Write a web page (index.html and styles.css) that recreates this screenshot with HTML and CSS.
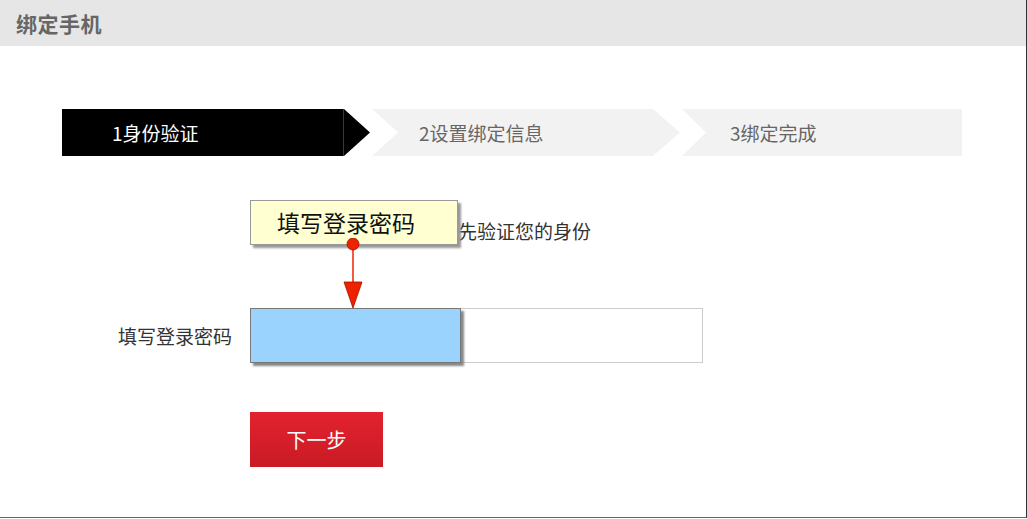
FILE: index.html
```html
<!DOCTYPE html>
<html lang="zh-CN">
<head>
    <meta charset="UTF-8">
    <meta name="viewport" content="width=device-width, initial-scale=1.0">
    <title>绑定手机</title>
    <link rel="stylesheet" href="styles.css">
</head>
<body>
    <div class="panel">
        <div class="panel-title">绑定手机</div>

        <!-- 步骤条 -->
        <div class="steps">
            <div class="step step-first active">1身份验证</div>
            <div class="step step-mid">2设置绑定信息</div>
            <div class="step step-last">3绑定完成</div>
        </div>

        <div class="form">
            <p class="intro">请先验证您的身份</p>
            <div class="form-row">
                <label class="form-label" for="pwd">填写登录密码</label>
                <input class="form-input" id="pwd" type="password">
            </div>
            <div class="form-row">
                <span class="form-label"></span>
                <button class="btn-next">下一步</button>
            </div>
        </div>

        <!-- 标注 -->
        <div class="note">填写登录密码</div>
        <svg class="note-pointer" width="24" height="72" viewBox="0 0 24 72">
            <line x1="12" y1="6" x2="12" y2="50" stroke="#ee2200" stroke-width="1.5"/>
            <polygon points="3,44 21,44 12,70" fill="#ee2200" stroke="#a01000" stroke-width="0.8"/>
            <circle cx="12" cy="6" r="6" fill="#ee2200" stroke="#a01000" stroke-width="0.8"/>
        </svg>
        <div class="note-field"></div>
    </div>
</body>
</html>
```
FILE: styles.css
```css
body {
    margin: 0;
    background-color: white;
    font-family: "Noto Sans CJK SC", "Liberation Sans", sans-serif;
}
.panel {
    position: relative;
    height: 518px;
    border-right: 1px solid #333;
    border-bottom: 1px solid #666;
    box-sizing: border-box;
    width: 1027px;
}
.panel-title {
    height: 46px;
    line-height: 46px;
    background-color: #e6e6e6;
    color: #666;
    font-size: 21px;
    font-weight: bold;
    padding-left: 16px;
    letter-spacing: 0.5px;
}
.steps {
    display: flex;
    gap: 2px;
    margin: 63px 0 0 62px;
    height: 47px;
}
.step {
    height: 47px;
    line-height: 47px;
    font-size: 19px;
    color: #666;
    background-color: #f2f2f2;
    box-sizing: border-box;
}
.step-first {
    width: 308px;
    padding-left: 50px;
    clip-path: polygon(0 0, 282px 0, 100% 50%, 282px 100%, 0 100%);
}
.step-first.active {
    background: linear-gradient(to right, #000 281px, #b00 281px, #b00 282px, #000 282px);
    color: white;
}
.step-mid {
    width: 308px;
    padding-left: 47px;
    clip-path: polygon(0 0, 281px 0, 100% 50%, 281px 100%, 0 100%, 26px 50%);
}
.step-last {
    width: 280px;
    padding-left: 48px;
    clip-path: polygon(0 0, 100% 0, 100% 100%, 0 100%, 24px 50%);
}
.form {
    display: flex;
    flex-direction: column;
}
.intro {
    margin: 60px 0 0 439px;
    font-size: 19px;
    line-height: 30px;
    color: #333;
}
.form-row {
    display: flex;
    align-items: center;
    gap: 19px;
}
.form-row + .form-row {
    margin-top: 49px;
}
.intro + .form-row {
    margin-top: 62px;
}
.form-label {
    width: 232px;
    text-align: right;
    font-size: 19px;
    color: #333;
}
.form-input {
    width: 453px;
    height: 55px;
    border: 1px solid #ccc;
    box-sizing: border-box;
    margin: 0 0 0 -1px;
}
.btn-next {
    width: 133px;
    height: 55px;
    border: none;
    margin-left: -1px;
    background: linear-gradient(#e3222f, #c81b25);
    color: white;
    font-family: inherit;
    font-size: 20px;
    cursor: pointer;
}
.note {
    position: absolute;
    left: 250px;
    top: 200px;
    width: 208px;
    height: 45px;
    box-sizing: border-box;
    background-color: #ffffd2;
    border: 1px solid #999;
    box-shadow: 3px 3px 2px #999;
    font-size: 23px;
    line-height: 43px;
    padding-left: 26px;
    color: #111;
}
.note-pointer {
    position: absolute;
    left: 341px;
    top: 238px;
}
.note-field {
    position: absolute;
    left: 250px;
    top: 308px;
    width: 211px;
    height: 55px;
    box-sizing: border-box;
    background-color: #99d3fe;
    border: 1px solid #777;
    box-shadow: 3px 3px 2px #888;
}
```
